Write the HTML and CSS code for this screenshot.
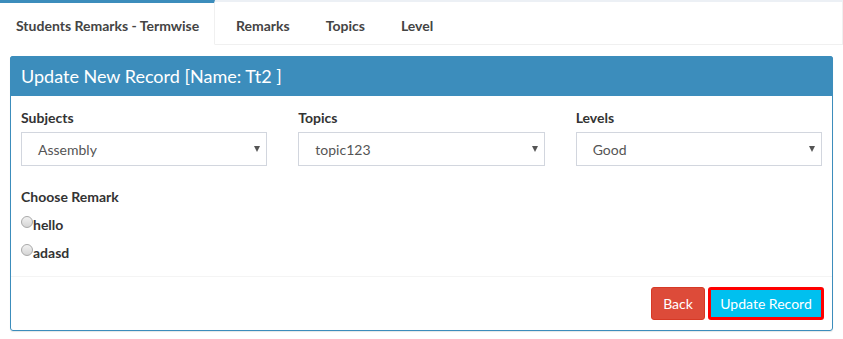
FILE: index.html
```html
<!DOCTYPE html>
<html lang="en">
<head>
	<meta charset="UTF-8">
	<title>Students Remarks</title>
	<link rel="stylesheet" href="styles.css">
</head>
<body>
	<div class="tabs">
		<ul class="nav">
			<li class="active">Students Remarks - Termwise</li>
			<li>Remarks</li>
			<li>Topics</li>
			<li>Level</li>
		</ul>
		<div class="tab-content">
			<section class="box">
				<header class="box-header">Update New Record [Name: Tt2 ]</header>
				<div class="box-body">
					<div class="fields">
						<div class="field">
							<label>Subjects</label>
							<div class="select"><span>Assembly</span><i class="caret"></i></div>
						</div>
						<div class="field">
							<label>Topics</label>
							<div class="select"><span>topic123</span><i class="caret"></i></div>
						</div>
						<div class="field">
							<label>Levels</label>
							<div class="select"><span>Good</span><i class="caret"></i></div>
						</div>
					</div>
					<label class="remark-title">Choose Remark</label>
					<label class="radio"><input type="radio" name="remark">hello</label>
					<label class="radio"><input type="radio" name="remark">adasd</label>
				</div>
				<footer class="box-footer">
					<button class="btn btn-back">Back</button>
					<button class="btn btn-update">Update Record</button>
				</footer>
			</section>
		</div>
	</div>
</body>
</html>
```

FILE: styles.css
```css
* { box-sizing: border-box; }
body {
	margin: 0;
	background: #fff;
	font-family: Lato, "Open Sans", sans-serif;
	font-size: 14px;
	color: #333;
}

/* tabs */
.tabs {
	border-top: 2px solid #ecf0f5;
}
.nav {
	display: flex;
	list-style: none;
	margin: -2px 0 0 0;
	padding: 0;
	height: 45px;
}
.nav li {
	padding: 0 18px;
	line-height: 47px;
	font-weight: bold;
	color: #444;
	white-space: nowrap;
	border-top: 2px solid transparent;
	border-bottom: 1px solid #f0f0f0;
}
.nav li.active {
	border-top: 3px solid #3c8dbc;
	border-right: 1px solid #f0f0f0;
	border-bottom-color: #fff;
	padding: 0 16px;
	line-height: 46px;
	width: 215px;
}
.nav li:nth-child(2) { padding-left: 21px; }
.nav li:last-child {
	flex: 1;
	border-right: 1px solid #f0f0f0;
	border-radius: 0 3px 0 0;
}

.tab-content {
	padding: 11px 10px 7px 10px;
}

/* box */
.box {
	border: 1px solid #3c8dbc;
	border-radius: 3px;
	box-shadow: 0 1px 1px rgba(0,0,0,0.1);
}
.box-header {
	background: #3c8dbc;
	color: #fff;
	font-size: 18px;
	height: 40px;
	line-height: 40px;
	padding: 0 11px;
	margin: -1px -1px 0 -1px;
	border-radius: 3px 3px 0 0;
	white-space: nowrap;
}
.box-body {
	padding: 13px 10px 10px 10px;
}
.fields {
	display: grid;
	grid-template-columns: repeat(3, 1fr);
	column-gap: 31px;
}
.field label,
.remark-title {
	display: block;
	font-weight: bold;
	margin-bottom: 6px;
}
.select {
	display: flex;
	align-items: center;
	justify-content: space-between;
	height: 34px;
	border: 1px solid #d2d6de;
	padding: 0 6px 0 16px;
	color: #555;
}
.caret {
	width: 0;
	height: 0;
	border-left: 3px solid transparent;
	border-right: 3px solid transparent;
	border-top: 6px solid #555;
}
.remark-title {
	margin-top: 22px;
	margin-bottom: 5px;
}
.radio {
	display: flex;
	align-items: center;
	font-weight: bold;
	height: 28px;
}
.radio input {
	appearance: none;
	-webkit-appearance: none;
	margin: -4px 0 0 0;
	width: 12px;
	height: 12px;
	border: 1px solid #a9a9a9;
	border-radius: 50%;
	background: linear-gradient(#f2f2f2, #d5d5d5);
}

.box-footer {
	border-top: 1px solid #f4f4f4;
	padding: 10px 8px 10px 10px;
	display: flex;
	justify-content: flex-end;
	gap: 3px;
}
.btn {
	font-family: inherit;
	font-size: 14px;
	color: #fff;
	border: 1px solid transparent;
	border-radius: 3px;
	height: 33px;
	padding: 0 6px;
	white-space: nowrap;
}
.btn-back {
	background: #dd4b39;
	border-color: #d73925;
	width: 54px;
}
.btn-update {
	background: #00c0ef;
	border: 3px solid #f00;
	width: 116px;
}
```
